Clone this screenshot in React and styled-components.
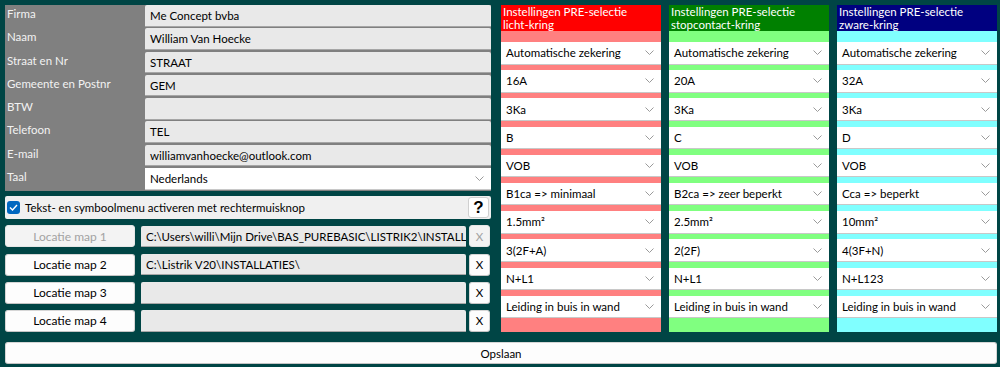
import styled, { createGlobalStyle } from 'styled-components';

const GlobalStyle = createGlobalStyle`
  html, body {
    margin: 0;
    background: #004545;
  }
  body {
    font-family: Lato, 'Noto Sans', 'Liberation Sans', sans-serif;
    font-size: 11.5px;
    color: #000;
  }
`;

const Page = styled.div`
  width: 1000px;
  height: 367px;
  box-sizing: border-box;
  padding: 5px 3px 0 5px;
  display: flex;
  flex-direction: column;
`;

const Top = styled.div`
  display: flex;
  gap: 10px;
`;

const Left = styled.div`
  width: 486px;
  display: flex;
  flex-direction: column;
`;

const InfoPanel = styled.div`
  background: #808080;
  display: grid;
  grid-template-columns: 140px 1fr;
  grid-auto-rows: 23.3px;
`;

const Label = styled.div`
  color: #f2f2f2;
  padding: 1px 0 0 2px;
  line-height: 15px;
`;

const Field = styled.div`
  height: 21.5px;
  box-sizing: border-box;
  background: #e9e9e9;
  border-bottom: 1px solid #a6a6a6;
  border-radius: 2px 2px 0 0;
  padding: 0 5px;
  line-height: 21px;
  white-space: nowrap;
  overflow: hidden;
`;

const Chevron = () => (
  <svg width="9" height="5" viewBox="0 0 9 5">
    <polyline points="0.5,0.5 4.5,4.5 8.5,0.5" fill="none" stroke="#9a9a9a" strokeWidth="1" />
  </svg>
);

const Select = styled.div`
  height: ${(p) => p.$h || '21.5px'};
  box-sizing: border-box;
  background: #fff;
  border-bottom: 1px solid #c8c8c8;
  padding: 0 7px 0 5px;
  display: flex;
  align-items: center;
  justify-content: space-between;
  white-space: nowrap;
`;

const OptionRow = styled.div`
  margin-top: 5px;
  height: 23px;
  background: #f0f0f0;
  border-radius: 2px;
  display: flex;
  align-items: center;
  padding: 0 2px;
  gap: 5px;
`;

const Check = styled.span`
  width: 13px;
  height: 13px;
  border-radius: 3px;
  background: #0067c0;
  display: flex;
  align-items: center;
  justify-content: center;
`;

const OptionText = styled.span`
  flex: 1;
`;

const HelpButton = styled.button`
  width: 21px;
  height: 21px;
  padding: 0;
  border: 1px solid #d0d0d0;
  border-radius: 3px;
  background: #fff;
  font: bold 17px 'Liberation Sans', sans-serif;
  line-height: 19px;
  color: #000;
`;

const LocList = styled.div`
  margin-top: 6px;
  display: flex;
  flex-direction: column;
  gap: 6.2px;
`;

const LocRow = styled.div`
  display: flex;
  align-items: center;
  height: 22px;
`;

const Button = styled.button`
  height: 22px;
  box-sizing: border-box;
  border: 1px solid ${(p) => (p.disabled ? '#e6e6e6' : '#d6d6d6')};
  border-bottom-color: ${(p) => (p.disabled ? '#e6e6e6' : '#c4c4c4')};
  border-radius: 3px;
  background: ${(p) => (p.disabled ? '#f3f3f3' : '#fdfdfd')};
  color: ${(p) => (p.disabled ? '#a2a2a2' : '#000')};
  font: 11.5px Lato, 'Noto Sans', 'Liberation Sans', sans-serif;
  padding: 0;
`;

const LocButton = styled(Button)`
  width: 130px;
  font-size: 12px;
`;

const PathField = styled(Field)`
  margin-left: 6px;
  width: 325px;
  flex: none;
`;

const ClearButton = styled(Button)`
  width: 21px;
  margin-left: 3px;
`;

const Columns = styled.div`
  display: flex;
  gap: 8px;
`;

const Column = styled.div`
  width: 160px;
  height: 327px;
  background: ${(p) => p.$light};
  display: flex;
  flex-direction: column;
`;

const ColumnHead = styled.div`
  height: 26px;
  background: ${(p) => p.$dark};
  color: #fff;
  padding: 0 2px;
  line-height: 13px;
`;

const SelectList = styled.div`
  margin-top: 11px;
  display: flex;
  flex-direction: column;
  gap: 5.7px;
`;

const SaveButton = styled(Button)`
  margin-top: 10px;
  width: 992px;
`;

const info = [
  ['Firma', 'Me Concept bvba'],
  ['Naam', 'William Van Hoecke'],
  ['Straat en Nr', 'STRAAT'],
  ['Gemeente en Postnr', 'GEM'],
  ['BTW', ''],
  ['Telefoon', 'TEL'],
  ['E-mail', 'williamvanhoecke@outlook.com'],
];

const locations = [
  ['Locatie map 1', 'C:\\Users\\willi\\Mijn Drive\\BAS_PUREBASIC\\LISTRIK2\\INSTALLATIES\\', true],
  ['Locatie map 2', 'C:\\Listrik V20\\INSTALLATIES\\', false],
  ['Locatie map 3', '', false],
  ['Locatie map 4', '', false],
];

const columns = [
  {
    title: 'licht-kring',
    dark: '#ff0000',
    light: '#ff8080',
    values: ['Automatische zekering', '16A', '3Ka', 'B', 'VOB', 'B1ca => minimaal', '1.5mm²', '3(2F+A)', 'N+L1', 'Leiding in buis in wand'],
  },
  {
    title: 'stopcontact-kring',
    dark: '#008000',
    light: '#80ff80',
    values: ['Automatische zekering', '20A', '3Ka', 'C', 'VOB', 'B2ca => zeer beperkt', '2.5mm²', '2(2F)', 'N+L1', 'Leiding in buis in wand'],
  },
  {
    title: 'zware-kring',
    dark: '#000080',
    light: '#80ffff',
    values: ['Automatische zekering', '32A', '3Ka', 'D', 'VOB', 'Cca => beperkt', '10mm²', '4(3F+N)', 'N+L123', 'Leiding in buis in wand'],
  },
];

export default function App() {
  return (
    <>
      <GlobalStyle />
      <Page>
        <Top>
          <Left>
            <InfoPanel>
              {info.map(([label, value]) => (
                <>
                  <Label key={label}>{label}</Label>
                  <Field key={label + 'v'}>{value}</Field>
                </>
              ))}
              <Label>Taal</Label>
              <Select>
                Nederlands
                <Chevron />
              </Select>
            </InfoPanel>
            <OptionRow>
              <Check>
                <svg width="9" height="7" viewBox="0 0 9 7">
                  <polyline points="1,3.5 3.5,6 8,1" fill="none" stroke="#fff" strokeWidth="1.4" />
                </svg>
              </Check>
              <OptionText>Tekst- en symboolmenu activeren met rechtermuisknop</OptionText>
              <HelpButton>?</HelpButton>
            </OptionRow>
            <LocList>
              {locations.map(([name, path, disabled]) => (
                <LocRow key={name}>
                  <LocButton disabled={disabled}>{name}</LocButton>
                  <PathField>{path}</PathField>
                  <ClearButton disabled={disabled}>X</ClearButton>
                </LocRow>
              ))}
            </LocList>
          </Left>
          <Columns>
            {columns.map((col) => (
              <Column key={col.title} $light={col.light}>
                <ColumnHead $dark={col.dark}>
                  Instellingen PRE-selectie
                  <br />
                  {col.title}
                </ColumnHead>
                <SelectList>
                  {col.values.map((v, i) => (
                    <Select key={i} $h="22.5px">
                      {v}
                      <Chevron />
                    </Select>
                  ))}
                </SelectList>
              </Column>
            ))}
          </Columns>
        </Top>
        <SaveButton>Opslaan</SaveButton>
      </Page>
    </>
  );
}
